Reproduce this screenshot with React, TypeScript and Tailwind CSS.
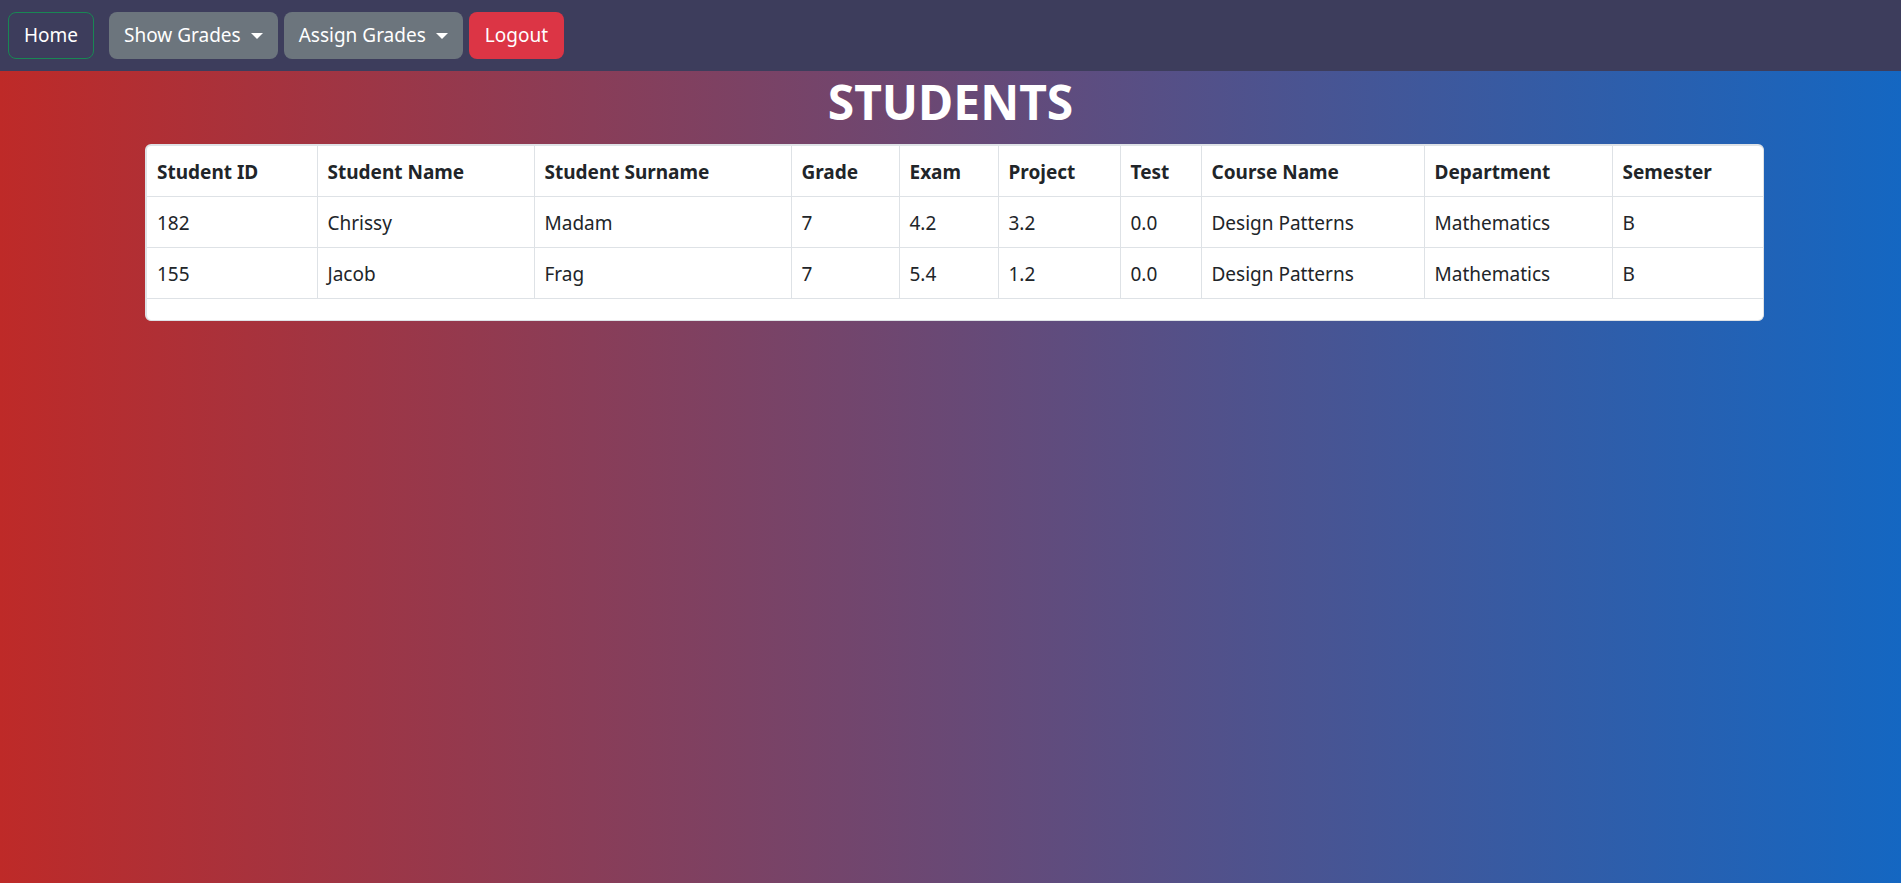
import React from "react";

const cols = [
  { name: "Student ID", w: 170 },
  { name: "Student Name", w: 217 },
  { name: "Student Surname", w: 257 },
  { name: "Grade", w: 108 },
  { name: "Exam", w: 99 },
  { name: "Project", w: 122 },
  { name: "Test", w: 81 },
  { name: "Course Name", w: 223 },
  { name: "Department", w: 188 },
  { name: "Semester", w: 151 },
];

const rows = [
  ["182", "Chrissy", "Madam", "7", "4.2", "3.2", "0.0", "Design Patterns", "Mathematics", "B"],
  ["155", "Jacob", "Frag", "7", "5.4", "1.2", "0.0", "Design Patterns", "Mathematics", "B"],
];

function Caret() {
  return (
    <span className="ml-[10px] inline-block h-0 w-0 border-x-[6px] border-t-[6px] border-x-transparent border-t-white align-middle" />
  );
}

export default function App() {
  return (
    <div
      className="min-h-screen w-full bg-linear-to-r/srgb from-[#be2a28] to-[#1467c2] text-[#212529]"
      style={{ fontFamily: '"Noto Sans", "Open Sans", Arial, sans-serif' }}
    >
      <nav className="flex h-[71px] items-center bg-[#3d3d5c] pl-[8px]">
        <button className="h-[47px] rounded-[8px] border border-[#198754] px-[15px] text-[19px] text-white">
          Home
        </button>
        <button className="ml-[15px] flex h-[47px] items-center rounded-[8px] bg-[#6c757d] px-[15px] text-[19px] text-white">
          Show Grades
          <Caret />
        </button>
        <button className="ml-[6px] flex h-[47px] items-center rounded-[8px] bg-[#6c757d] px-[15px] text-[19px] text-white">
          Assign Grades
          <Caret />
        </button>
        <button className="ml-[6px] h-[47px] rounded-[8px] bg-[#dc3545] px-[16px] text-[19px] text-white">
          Logout
        </button>
      </nav>
      <h1 className="mt-[2px] mb-[13px] text-center text-[48px] leading-[58px] font-bold text-white">
        STUDENTS
      </h1>
      <div className="ml-[145px] w-[1619px] rounded-[6px] border-2 border-[#dee2e6] border-r border-b bg-white pb-[21px]">
        <table className="w-full table-fixed border-collapse text-[19px] leading-[30px]">
          <colgroup>
            {cols.map((c) => (
              <col key={c.name} style={{ width: c.w }} />
            ))}
          </colgroup>
          <thead>
            <tr>
              {cols.map((c, i) => (
                <th
                  key={c.name}
                  className={`border-b border-[#dee2e6] px-[10px] pt-[11px] pb-[9px] text-left font-bold ${i > 0 ? "border-l" : ""}`}
                >
                  {c.name}
                </th>
              ))}
            </tr>
          </thead>
          <tbody>
            {rows.map((r, ri) => (
              <tr key={ri}>
                {r.map((v, i) => (
                  <td
                    key={i}
                    className={`border-b border-[#dee2e6] px-[10px] pt-[11px] pb-[9px] ${i > 0 ? "border-l" : ""}`}
                  >
                    {v}
                  </td>
                ))}
              </tr>
            ))}
          </tbody>
        </table>
      </div>
    </div>
  );
}
